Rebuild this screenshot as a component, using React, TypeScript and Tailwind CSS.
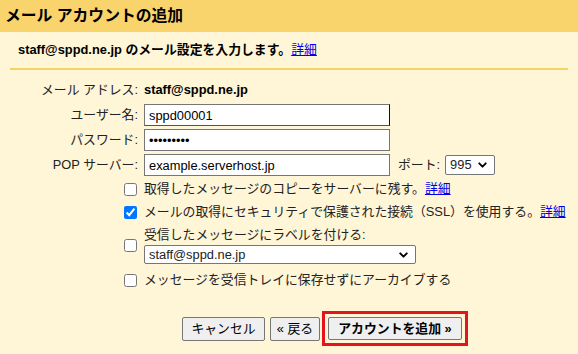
import { ChevronDown } from "lucide-react";

const font = "font-['Liberation_Sans','Noto_Sans_CJK_JP',sans-serif]";

function Label({ children }: { children: React.ReactNode }) {
  return <div className="w-[139px] shrink-0 text-right pr-[1px]">{children}</div>;
}

function Select({ value, className }: { value: string; className: string }) {
  return (
    <div
      className={`relative flex items-center border border-[#767676] rounded-[2px] bg-white pl-[4px] ${className}`}
    >
      <span>{value}</span>
      <ChevronDown
        className="absolute right-[5px] top-1/2 -translate-y-1/2 text-black"
        size={13}
        strokeWidth={3.5}
      />
    </div>
  );
}

function Check({ checked }: { checked?: boolean }) {
  return (
    <input
      type="checkbox"
      defaultChecked={checked}
      className="w-[13px] h-[13px] m-0 shrink-0 accent-[#0075ff]"
    />
  );
}

function Link({ children }: { children: React.ReactNode }) {
  return <a className="text-[#0000ee] underline cursor-pointer">{children}</a>;
}

export default function App() {
  return (
    <div className={`w-[578px] h-[354px] bg-[#fff5d7] text-[#222] text-[12.85px] ${font}`}>
      <div className="h-[32px] bg-[#f9d36b] flex items-center px-[5px]">
        <h1 className="text-[15.8px] font-bold text-black">メール アカウントの追加</h1>
      </div>

      <div className="h-[36px] flex items-center pl-[18px] font-bold text-black">
        staff@sppd.ne.jp のメール設定を入力します。
        <span className="font-normal">
          <Link>詳細</Link>
        </span>
      </div>

      <div className="mx-[10px] h-[2px] bg-[#f6d165]" />

      <div className="pt-[9px] flex flex-col gap-[3px]">
        <div className="h-[22px] flex items-center gap-[5px]">
          <Label>メール アドレス:</Label>
          <span className="font-bold text-black">staff@sppd.ne.jp</span>
        </div>
        <div className="h-[22px] flex items-center gap-[5px]">
          <Label>ユーザー名:</Label>
          <input
            readOnly
            defaultValue="sppd00001"
            className="w-[246px] h-[22px] border border-[#767676] border-r-[#111] border-b-[#555] bg-white px-[4px] text-black outline-none"
          />
        </div>
        <div className="h-[22px] flex items-center gap-[5px]">
          <Label>パスワード:</Label>
          <input
            readOnly
            type="password"
            defaultValue="123456789"
            className="w-[246px] h-[22px] border border-[#767676] bg-white px-[4px] text-black outline-none"
          />
        </div>
        <div className="h-[22px] flex items-center gap-[5px]">
          <Label>POP サーバー:</Label>
          <input
            readOnly
            defaultValue="example.serverhost.jp"
            className="w-[246px] h-[22px] border border-[#767676] bg-white px-[4px] text-black outline-none"
          />
          <span className="ml-[3px]">ポート:</span>
          <Select value="995" className="w-[50px] h-[20px]" />
        </div>
      </div>

      <div className="mt-[2px] pl-[124px] flex flex-col">
        <div className="h-[22px] flex items-center gap-[7px]">
          <Check />
          <span>
            取得したメッセージのコピーをサーバーに残す。<Link>詳細</Link>
          </span>
        </div>
        <div className="h-[24px] flex items-center gap-[7px]">
          <Check checked />
          <span>
            メールの取得にセキュリティで保護された接続（SSL）を使用する。<Link>詳細</Link>
          </span>
        </div>
        <div className="mt-[2px] flex items-center gap-[7px]">
          <Check />
          <div className="flex flex-col gap-[1px]">
            <span className="h-[18px] leading-[18px]">受信したメッセージにラベルを付ける:</span>
            <Select value="staff@sppd.ne.jp" className="w-[272px] h-[19px]" />
          </div>
        </div>
        <div className="mt-[5px] h-[22px] flex items-center gap-[7px]">
          <Check />
          <span>メッセージを受信トレイに保存せずにアーカイブする</span>
        </div>
      </div>

      <div className="mt-[20px] ml-[182px] flex items-center">
        <button className="h-[24px] w-[83px] border border-[#767676] rounded-[2px] bg-[#efefef] text-black">
          キャンセル
        </button>
        <button className="ml-[5px] h-[24px] w-[50px] border border-[#767676] rounded-[2px] bg-[#efefef] text-black">
          « 戻る
        </button>
        <div className="ml-[2px] border-[3px] border-[#e3141e] p-[3px]">
          <button className="h-[23px] w-[134px] border border-[#767676] rounded-[2px] bg-[#efefef] text-black font-bold">
            アカウントを追加 »
          </button>
        </div>
      </div>
    </div>
  );
}
